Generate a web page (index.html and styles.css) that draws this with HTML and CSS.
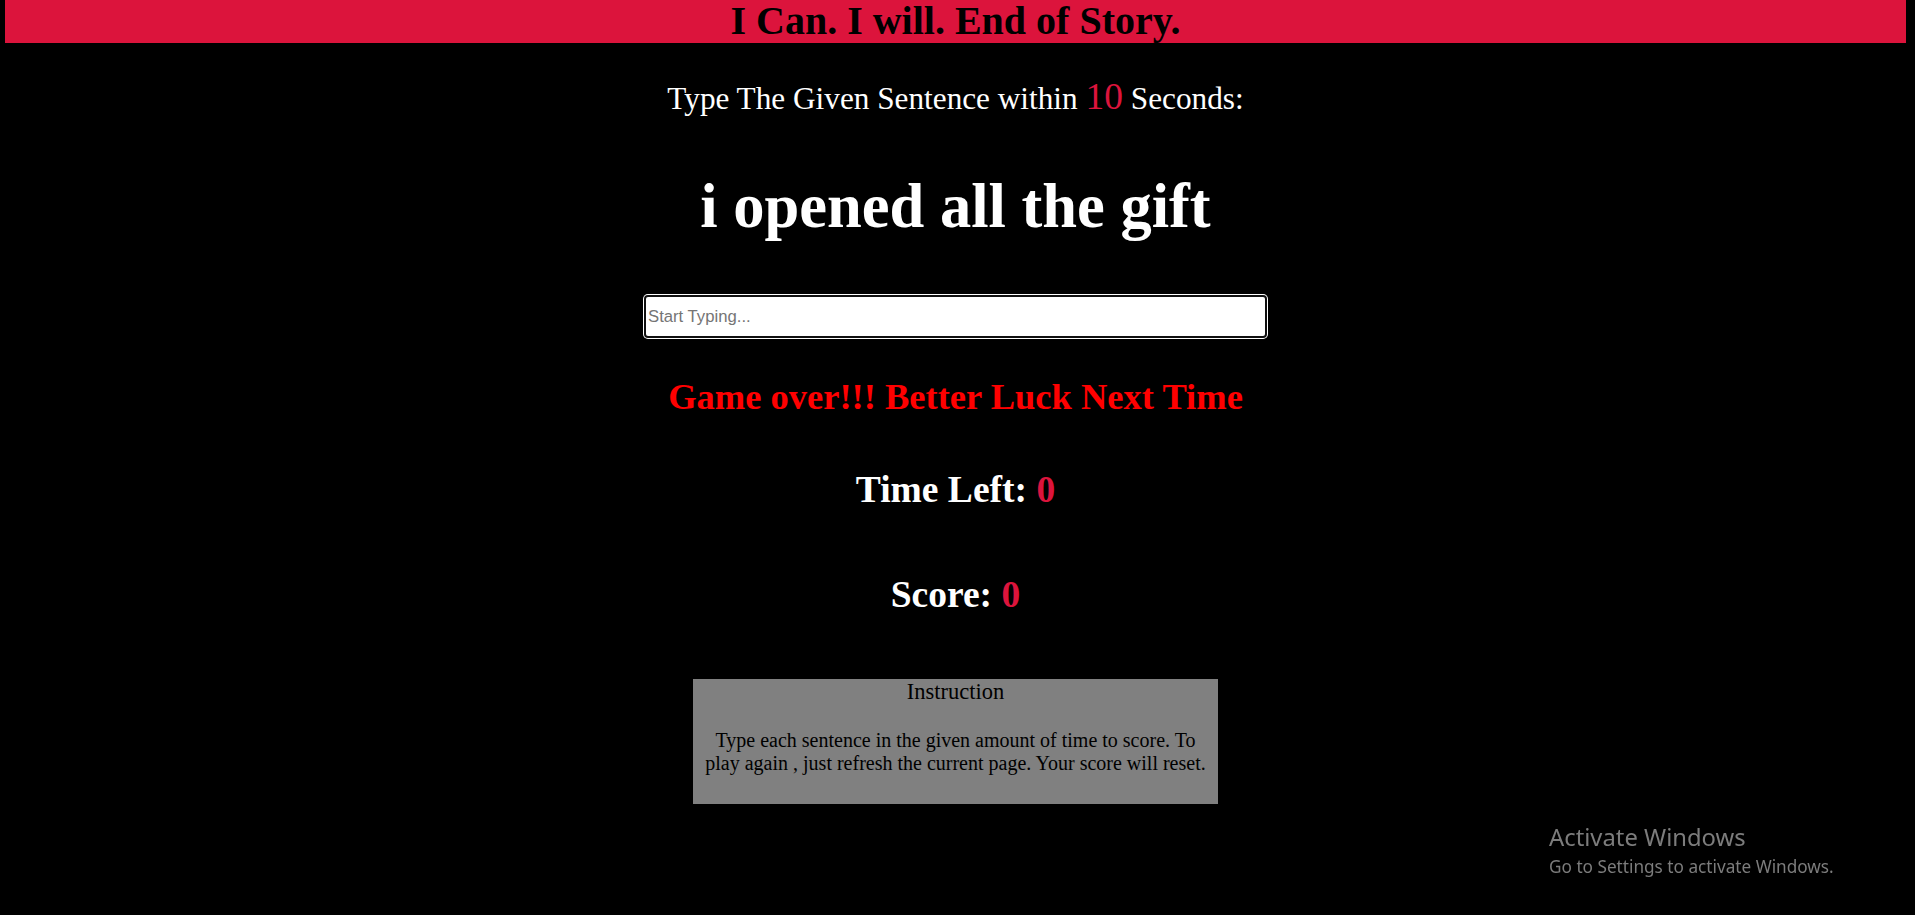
FILE: index.html
```html
<!DOCTYPE html>
<html lang="en">
<head>
<meta charset="utf-8">
<title>Typing Game</title>
<link rel="stylesheet" href="styles.css">
</head>
<body>
<div class="page">
  <header class="banner">I Can. I will. End of Story.</header>
  <p class="prompt">Type The Given Sentence within <span class="secs">10</span> Seconds:</p>
  <h1 class="sentence">i opened all the gift</h1>
  <div class="field"><input class="typing" type="text" placeholder="Start Typing..."></div>
  <h2 class="status">Game over!!! Better Luck Next Time</h2>
  <h2 class="stat stat-time">Time Left: <span class="num">0</span></h2>
  <h2 class="stat stat-score">Score: <span class="num">0</span></h2>
  <section class="instructions">
    <h3 class="instructions-title">Instruction</h3>
    <p class="instructions-text">Type each sentence in the given amount of time to score. To play again , just refresh the current page. Your score will reset.</p>
  </section>
</div>
<div class="activate">
  <div class="activate-title">Activate Windows</div>
  <div class="activate-sub">Go to Settings to activate Windows.</div>
</div>
</body>
</html>
```

FILE: styles.css
```css
html, body {
  margin: 0;
  padding: 0;
  background: #000;
  height: 100%;
  overflow: hidden;
}

body {
  font-family: "Liberation Serif", "Times New Roman", serif;
  color: #fff;
}

.page {
  margin: 0 9px 0 5px;
  display: flex;
  flex-direction: column;
  align-items: center;
  text-align: center;
}

.banner {
  align-self: stretch;
  background: #dc143c;
  color: #000;
  font-weight: bold;
  font-size: 40px;
  height: 43px;
  line-height: 42px;
}

.prompt {
  margin: 34px 0 0;
  font-size: 31.25px;
  line-height: 40px;
}

.secs {
  color: #dc143c;
  font-size: 37.5px;
}

.sentence {
  margin: 51px 0 0;
  font-size: 62.5px;
  line-height: 72px;
  font-weight: bold;
}

.field {
  margin-top: 55px;
  display: flex;
  justify-content: center;
}

.typing {
  box-sizing: border-box;
  width: 619px;
  height: 39px;
  margin: 0;
  padding: 1px 2px;
  border: 0;
  border-radius: 2px;
  background: #fff;
  box-shadow: 0 0 0 2px #101010, 0 0 0 3px #fff;
  outline: none;
  font-family: "Liberation Sans", Arial, sans-serif;
  font-size: 16.7px;
  color: #000;
}

.typing::placeholder {
  color: #757575;
}

.status {
  margin: 40px 0 0;
  color: #ff0000;
  font-size: 36.5px;
  line-height: 42px;
  font-weight: bold;
}

.stat {
  margin: 0;
  font-size: 37.5px;
  line-height: 43px;
  font-weight: bold;
}

.stat-time {
  margin-top: 49.5px;
}

.stat-score {
  margin-top: 62.6px;
}

.num {
  color: #dc143c;
}

.instructions {
  box-sizing: border-box;
  margin-top: 63px;
  width: 525px;
  height: 125px;
  padding: 0 10px;
  background: #808080;
  color: #000;
}

.instructions-title {
  margin: 0;
  font-size: 22.5px;
  line-height: 26px;
  font-weight: normal;
}

.instructions-text {
  margin: 23.6px 0 0;
  font-size: 20px;
  line-height: 23px;
}

.activate {
  position: fixed;
  left: 1549px;
  top: 822px;
  color: #7c7c7c;
  font-family: "Noto Sans", "Open Sans", sans-serif;
  text-align: left;
}

.activate-title {
  font-size: 23.8px;
  line-height: 31px;
}

.activate-sub {
  font-size: 17.2px;
  line-height: 27px;
}
```
